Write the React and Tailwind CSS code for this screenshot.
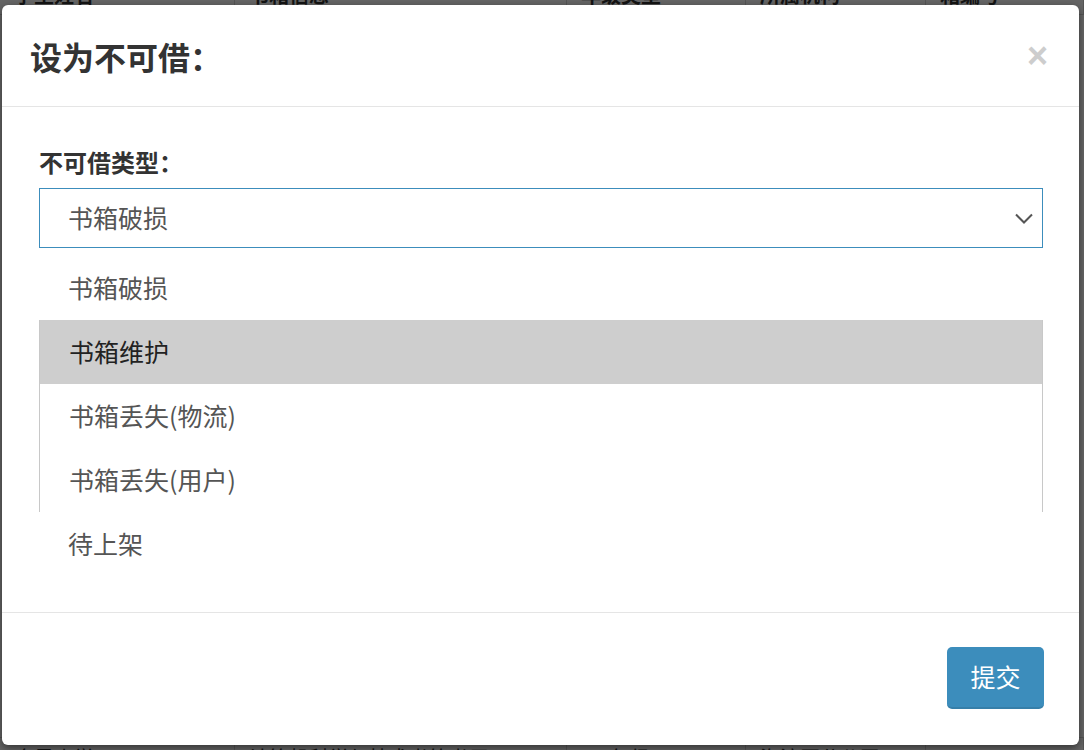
import React from "react";

const options = ["书箱破损", "书箱维护", "书箱丢失(物流)", "书箱丢失(用户)", "待上架"];

const cols = ["w-[235px]", "w-[332px]", "w-[179px]", "w-[180px]", "flex-1"];
const headCells = ["学生姓名", "书箱信息", "年级类型", "所属机构", "箱编号"];
const lastCells = ["金星小学", "计算机科学与技术书箱书屋", "3-6年级", "海淀区分公司", "无"];

const ChevronDown = () => (
  <svg width="18" height="11" viewBox="0 0 18 11" fill="none">
    <path d="M1 1.5L9 9.5L17 1.5" stroke="#555" strokeWidth="2" />
  </svg>
);

const App = () => {
  return (
    <div
      className="relative h-[750px] w-[1084px] overflow-hidden bg-[#666]"
      style={{ fontFamily: '"Noto Sans CJK SC", "Noto Sans", sans-serif' }}
    >
      {/* table behind the overlay */}
      <div className="flex h-full flex-col text-[20px] text-[#141414]">
        <div className="-mt-[25px] flex h-[40px] border-b border-[#555]">
          {headCells.map((c, i) => (
            <div key={i} className={`${cols[i]} flex items-center border-r border-[#555] pl-[14px] font-bold`}>
              {c}
            </div>
          ))}
        </div>
        <div className="flex-1" />
        <div className="-mb-[27px] flex h-[40px] border-t border-[#555]">
          {lastCells.map((c, i) => (
            <div key={i} className={`${cols[i]} flex items-center border-r border-[#555] pl-[14px]`}>
              {c}
            </div>
          ))}
        </div>
      </div>

      {/* modal */}
      <div className="absolute left-[2px] top-[5px] flex h-[740px] w-[1077px] flex-col rounded-[6px] bg-white shadow-[0_3px_9px_rgba(0,0,0,0.5)]">
        <div className="flex h-[102px] items-center justify-between border-b border-[#e5e5e5] pl-[28px] pr-[31px]">
          <h4 className="text-[32px] font-bold leading-none text-[#333]">设为不可借：</h4>
          <span className="text-[36px] font-bold leading-none text-[#cdcdcd]" style={{ fontFamily: '"Liberation Sans", sans-serif' }}>
            ×
          </span>
        </div>

        <div className="px-[37px] pb-[36px] pt-[39px]">
          <label className="block text-[24px] font-bold leading-[32px] text-[#333]">不可借类型：</label>
          <div className="mt-[10px] flex h-[60px] w-[1004px] items-center justify-between border border-[#3c8dbc] pl-[28px] pr-[9px]">
            <span className="text-[25px] text-[#555]">书箱破损</span>
            <ChevronDown />
          </div>
          <ul className="mt-[8px] w-[1004px]">
            {options.map((o, i) => (
              <li
                key={o}
                className={
                  "flex h-[64px] items-center pl-[29px] text-[25px] " +
                  (i === 1 ? "bg-[#cecece] text-[#222] " : "text-[#555] ") +
                  (i >= 1 && i <= 3 ? "border-x border-[#c8c8c8]" : "")
                }
              >
                {o}
              </li>
            ))}
          </ul>
        </div>

        <div className="flex justify-end border-t border-[#e5e5e5] pr-[35px] pt-[34px]">
          <button className="h-[62px] w-[97px] rounded-[5px] border-b-2 border-[#367fa9] bg-[#3c8dbc] text-[25px] text-white">
            提交
          </button>
        </div>
      </div>
    </div>
  );
};

export default App;
